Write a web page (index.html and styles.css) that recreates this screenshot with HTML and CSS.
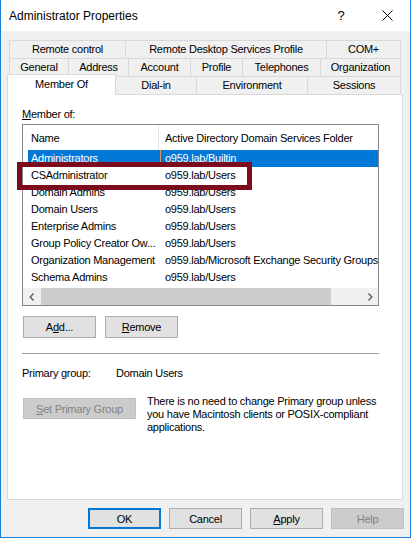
FILE: index.html
```html
<!DOCTYPE html>
<html>
<head>
<meta charset="utf-8">
<title>Administrator Properties</title>
<link rel="stylesheet" href="styles.css">
</head>
<body>
<div class="window">
  <div class="titlebar">
    <span class="title">Administrator Properties</span>
    <span class="cap-btn help">?</span>
    <span class="cap-btn close"><svg width="11" height="11" viewBox="0 0 11 11"><path d="M0.5 0.5L10.5 10.5M10.5 0.5L0.5 10.5" stroke="#000" stroke-width="1" fill="none"/></svg></span>
  </div>

  <div class="tabs">
    <div class="tabrow r1">
      <div class="tab">Remote control</div>
      <div class="tab">Remote Desktop Services Profile</div>
      <div class="tab last">COM+</div>
    </div>
    <div class="tabrow r2">
      <div class="tab">General</div>
      <div class="tab">Address</div>
      <div class="tab">Account</div>
      <div class="tab">Profile</div>
      <div class="tab">Telephones</div>
      <div class="tab last">Organization</div>
    </div>
    <div class="tabrow r3">
      <div class="tab sel">Member Of</div>
      <div class="tab noleft">Dial-in</div>
      <div class="tab">Environment</div>
      <div class="tab last">Sessions</div>
    </div>
  </div>

  <div class="page">
    <div class="label"><u>M</u>ember of:</div>
    <div class="list">
      <div class="lv-head">
        <div class="c1">Name</div>
        <div class="c2">Active Directory Domain Services Folder</div>
      </div>
      <div class="lv-body">
        <div class="lv-row sel"><div class="c1">Administrators</div><div class="c2">o959.lab/Builtin</div></div>
        <div class="lv-row"><div class="c1">CSAdministrator</div><div class="c2">o959.lab/Users</div></div>
        <div class="lv-row"><div class="c1">Domain Admins</div><div class="c2">o959.lab/Users</div></div>
        <div class="lv-row"><div class="c1">Domain Users</div><div class="c2">o959.lab/Users</div></div>
        <div class="lv-row"><div class="c1">Enterprise Admins</div><div class="c2">o959.lab/Users</div></div>
        <div class="lv-row"><div class="c1">Group Policy Creator Ow...</div><div class="c2">o959.lab/Users</div></div>
        <div class="lv-row"><div class="c1">Organization Management</div><div class="c2">o959.lab/Microsoft Exchange Security Groups</div></div>
        <div class="lv-row"><div class="c1">Schema Admins</div><div class="c2">o959.lab/Users</div></div>
      </div>
      <div class="hscroll">
        <div class="sb-btn"><svg width="6" height="8" viewBox="0 0 6 8"><path d="M4.5 0.5L1.2 4L4.5 7.5" stroke="#606060" stroke-width="1.4" fill="none"/></svg></div>
        <div class="sb-track"><div class="sb-thumb"></div></div>
        <div class="sb-btn"><svg width="6" height="8" viewBox="0 0 6 8"><path d="M1.5 0.5L4.8 4L1.5 7.5" stroke="#606060" stroke-width="1.4" fill="none"/></svg></div>
      </div>
      <div class="mark"></div>
    </div>

    <div class="btnrow">
      <button class="btn">A<u>d</u>d...</button>
      <button class="btn"><u>R</u>emove</button>
    </div>

    <div class="sep"></div>

    <div class="pg-row">
      <span class="pg-label">Primary group:</span>
      <span>Domain Users</span>
    </div>

    <div class="setpg-row">
      <button class="btn disabled wide"><u>S</u>et Primary Group</button>
      <p class="note">There is no need to change Primary group unless<br>you have Macintosh clients or POSIX-compliant<br>applications.</p>
    </div>
  </div>

  <div class="dlg-buttons">
    <button class="btn default">OK</button>
    <button class="btn">Cancel</button>
    <button class="btn"><u>A</u>pply</button>
    <button class="btn disabled">Help</button>
  </div>
</div>
</body>
</html>
```

FILE: styles.css
```css
* { box-sizing: border-box; }

html, body {
  margin: 0;
  padding: 0;
  background: #f0f0f0;
}

body {
  font-family: "Liberation Sans", Arial, sans-serif;
  font-size: 11px;
  letter-spacing: -0.25px;
  color: #000;
}

.window {
  width: 411px;
  height: 538px;
  border: 1px solid #1a7fd4;
  border-top: none;
  background: #f0f0f0;
  display: flex;
  flex-direction: column;
}

/* Title bar */
.titlebar {
  height: 31px;
  background: #fff;
  display: flex;
  align-items: center;
  padding-left: 8px;
  flex-shrink: 0;
}
.title {
  font-size: 12px;
  letter-spacing: 0;
  flex: 1;
  padding-top: 1px;
}
.cap-btn {
  width: 46px;
  height: 31px;
  display: flex;
  align-items: center;
  justify-content: center;
}
.help {
  font-size: 13px;
  letter-spacing: 0;
}
.close svg { display: block; }

/* Tabs */
.tabs {
  margin-top: 9px;
  display: flex;
  flex-direction: column;
}
.tabrow {
  display: grid;
  height: 18px;
}
.r1 {
  margin-left: 8px;
  grid-template-columns: 116px 201px 75px;
}
.r2 {
  margin-left: 8px;
  grid-template-columns: 59px 60px 62px 52px 78px 81px;
}
.r3 {
  margin-left: 6px;
  grid-template-columns: 109px 80px 111px 94px;
  position: relative;
  z-index: 1;
}
.tab {
  height: 18px;
  border-top: 1px solid #d9d9d9;
  border-left: 1px solid #d9d9d9;
  background: #f0f0f0;
  display: flex;
  align-items: center;
  justify-content: center;
  white-space: nowrap;
  padding-bottom: 1px;
}
.tab.last { border-right: 1px solid #d9d9d9; }
.tab.noleft { border-left: none; }
.tab.sel {
  height: 21px;
  margin-top: -2px;
  background: #fff;
  border-right: 1px solid #d9d9d9;
  padding-bottom: 2px;
}

/* Tab page */
.page {
  margin-left: 6px;
  width: 396px;
  height: 406px;
  background: #fff;
  border: 1px solid #d9d9d9;
  padding-left: 14px;
  flex-shrink: 0;
}
.label {
  margin-top: 12px;
  line-height: 14px;
}

/* List view */
.list {
  position: relative;
  margin-top: 3px;
  width: 357px;
  height: 182px;
  border: 1px solid #828790;
  display: flex;
  flex-direction: column;
}
.lv-head, .lv-row {
  display: grid;
  grid-template-columns: 130px minmax(0, 1fr);
  margin-left: 5px;
  white-space: nowrap;
}
.lv-head {
  height: 25px;
  line-height: 26px;
}
.lv-head .c1 { padding-left: 3px; }
.lv-head .c2 {
  border-left: 1px solid #e5e5e5;
  padding-left: 6px;
  overflow: hidden;
}
.lv-body { flex: 1; }
.lv-row {
  height: 17px;
  line-height: 17px;
}
.lv-row .c1 {
  padding-left: 3px;
  overflow: hidden;
}
.lv-row .c2 {
  padding-left: 7px;
  overflow: hidden;
}
.lv-row.sel {
  background: #0078d7;
  color: #fff;
}
.lv-row.sel .c2 {
  background: linear-gradient(to right, transparent 2px, #d9955a 2px, #d9955a 3px, transparent 3px);
}

.hscroll {
  height: 17px;
  display: flex;
  background: #f0f0f0;
}
.sb-btn {
  width: 17px;
  display: flex;
  align-items: center;
  justify-content: center;
}
.sb-track {
  flex: 1;
  padding: 0 1px;
}
.sb-thumb {
  width: 290px;
  height: 17px;
  background: #cdcdcd;
}

/* Callout rectangle drawn over the list */
.mark {
  position: absolute;
  left: -6px;
  top: 37px;
  width: 235px;
  height: 28px;
  border: 5px solid #7b0b1d;
}

/* Buttons */
.btn {
  font-family: inherit;
  font-size: 11px;
  letter-spacing: -0.25px;
  color: #000;
  background: #e1e1e1;
  border: 1px solid #adadad;
  border-radius: 0;
  padding: 0;
  margin: 0;
  width: 73px;
  height: 21px;
}
.btn.disabled {
  background: #cccccc;
  border-color: #bfbfbf;
  color: #838383;
}
.btn.default {
  border: 2px solid #0078d7;
}
.btn.wide { width: 113px; }

.btnrow {
  margin-top: 10px;
  margin-left: 1px;
  display: flex;
  gap: 9px;
}
.btnrow .btn { height: 22px; }

.sep {
  margin-top: 15px;
  width: 357px;
  height: 1px;
  background: #a0a0a0;
}

.pg-row {
  margin-top: 12px;
  line-height: 14px;
  display: flex;
}
.pg-label { width: 94px; }

.setpg-row {
  margin-top: 15px;
  display: flex;
  align-items: flex-start;
}
.setpg-row .btn {
  margin-left: 1px;
  margin-top: 3px;
}
.note {
  margin: 0 0 0 11px;
  line-height: 13px;
  white-space: nowrap;
}

/* Dialog buttons */
.dlg-buttons {
  margin-top: 8px;
  display: flex;
  justify-content: flex-end;
  gap: 8px;
  padding-right: 6px;
}
```
